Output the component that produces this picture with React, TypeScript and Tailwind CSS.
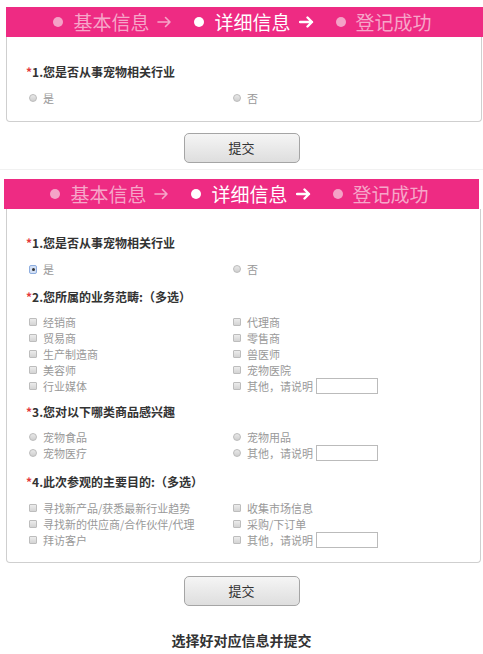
import type { ReactNode } from "react";

const FONT = { fontFamily: '"Microsoft YaHei", "Noto Sans CJK SC", sans-serif' };

function Steps() {
  const step = (label: string, active: boolean, arrow: boolean) => (
    <div className={`flex items-center ${active ? "text-white" : "text-[#f6a6c9]"}`}>
      <span
        className={`mr-[10px] inline-block size-[10px] rounded-full ${active ? "bg-white" : "bg-[#f4a3c7]"}`}
      />
      <span className="text-[19px] leading-[30px]">{label}</span>
      {arrow && (
        <svg
          width="15"
          height="12"
          viewBox="0 0 15 12"
          className="ml-[8px]"
          fill="none"
          stroke="currentColor"
          strokeWidth={active ? 2.4 : 1.6}
          strokeLinecap="round"
          strokeLinejoin="round"
        >
          <path d="M1 6h12M8.5 1.5 13 6l-4.5 4.5" />
        </svg>
      )}
    </div>
  );

  return (
    <div className="flex h-[30px] items-center justify-center gap-[22px] bg-[#ee2b83] pr-[4px]">
      {step("基本信息", false, true)}
      {step("详细信息", true, true)}
      {step("登记成功", false, false)}
    </div>
  );
}

function Question({ children }: { children: ReactNode }) {
  return (
    <div className="text-[12px] leading-4 font-bold text-[#333]">
      <span className="text-[#e4393c]">*</span>
      {children}
    </div>
  );
}

function Radio({ checked = false }: { checked?: boolean }) {
  if (checked) {
    return (
      <span className="flex size-[9px] items-center justify-center rounded-[2px] border border-[#8eaee0] bg-[#d3e0f5]">
        <span className="size-[3px] rounded-full bg-[#333]" />
      </span>
    );
  }
  return (
    <span className="inline-block size-[8px] rounded-full border border-[#bbb] bg-gradient-to-b from-[#e9e9e9] to-[#cfcfcf]" />
  );
}

function Checkbox() {
  return (
    <span className="inline-block size-[8px] rounded-[1px] border border-[#bdbdbd] bg-gradient-to-b from-[#ececec] to-[#d4d4d4]" />
  );
}

function Option({
  label,
  kind,
  checked,
  other,
}: {
  label: string;
  kind: "radio" | "check";
  checked?: boolean;
  other?: boolean;
}) {
  return (
    <div className="flex h-4 items-center text-[11px] text-[#999]">
      <span className="flex w-[8px] justify-center">
        {kind === "radio" ? <Radio checked={checked} /> : <Checkbox />}
      </span>
      <span className="ml-[6px] leading-4 whitespace-nowrap">{label}</span>
      {other && (
        <span className="ml-[3px] h-4 w-[62px] border border-[#bbb] bg-white" />
      )}
    </div>
  );
}

function Group({
  kind,
  rows,
  checkedFirst,
  className = "",
}: {
  kind: "radio" | "check";
  rows: [string, string][];
  checkedFirst?: boolean;
  className?: string;
}) {
  return (
    <div className={`ml-[3px] grid grid-cols-[204px_1fr] ${className}`}>
      {rows.map(([a, b], i) => (
        <div key={i} className="contents">
          <Option label={a} kind={kind} checked={checkedFirst && i === 0} />
          <Option label={b} kind={kind} other={b === "其他，请说明"} />
        </div>
      ))}
    </div>
  );
}

function SubmitButton() {
  return (
    <div className="flex justify-center">
      <button className="h-[30px] w-[116px] rounded-[5px] border border-[#a5a5a5] bg-gradient-to-b from-[#f5f5f5] to-[#dedede] text-[13px] text-[#333]">
        提交
      </button>
    </div>
  );
}

export default function App() {
  return (
    <div className="w-[483px] bg-white" style={FONT}>
      <div className="pt-[7px]">
        <div className="ml-[6px]">
          <Steps />
        </div>
        <div className="mr-[1px] ml-[6px] h-[85px] rounded-b-[4px] border border-t-0 border-[#cfcfcf] px-[19px] pt-[27px]">
          <Question>1.您是否从事宠物相关行业</Question>
          <Group kind="radio" rows={[["是", "否"]]} className="mt-[10px]" />
        </div>
        <div className="mt-[11px]">
          <SubmitButton />
        </div>
      </div>

      <div className="mt-[6px] border-t border-[#f1f1f1] pt-[9px]">
        <div className="mx-[4px]">
          <Steps />
        </div>
        <div className="mr-[2px] ml-[6px] rounded-b-[4px] border border-t-0 border-[#cfcfcf] px-[19px] pt-[26px] pb-[14px]">
          <Question>1.您是否从事宠物相关行业</Question>
          <Group kind="radio" rows={[["是", "否"]]} checkedFirst className="mt-[10px] mb-[12px]" />

          <Question>2.您所属的业务范畴:（多选）</Question>
          <Group
            kind="check"
            className="mt-[9px] mb-[10px]"
            rows={[
              ["经销商", "代理商"],
              ["贸易商", "零售商"],
              ["生产制造商", "兽医师"],
              ["美容师", "宠物医院"],
              ["行业媒体", "其他，请说明"],
            ]}
          />

          <Question>3.您对以下哪类商品感兴趣</Question>
          <Group
            kind="radio"
            className="mt-[9px] mb-[13px]"
            rows={[
              ["宠物食品", "宠物用品"],
              ["宠物医疗", "其他，请说明"],
            ]}
          />

          <Question>4.此次参观的主要目的:（多选）</Question>
          <Group
            kind="check"
            className="mt-[10px]"
            rows={[
              ["寻找新产品/获悉最新行业趋势", "收集市场信息"],
              ["寻找新的供应商/合作伙伴/代理", "采购/下订单"],
              ["拜访客户", "其他，请说明"],
            ]}
          />
        </div>
        <div className="mt-[13px]">
          <SubmitButton />
        </div>
        <div className="mt-[24px] pb-[14px] text-center text-[14px] leading-5 font-bold text-[#333]">
          选择好对应信息并提交
        </div>
      </div>
    </div>
  );
}
